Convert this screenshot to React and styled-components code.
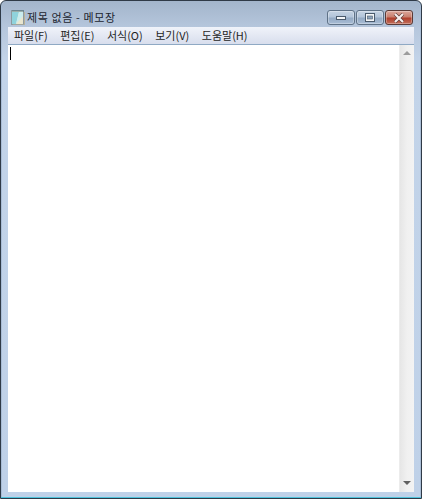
import styled, { createGlobalStyle } from "styled-components";

const GlobalStyle = createGlobalStyle`
  html, body {
    margin: 0;
    padding: 0;
    background: #fff;
  }
`;

const Window = styled.div`
  width: 422px;
  height: 499px;
  box-sizing: border-box;
  display: flex;
  flex-direction: column;
  border: 1px solid #2f3a47;
  border-radius: 6px 6px 0 0;
  padding: 0 7px 6px 7px;
  box-shadow: inset 0 -1px 0 #4fc3dc, inset 1px 0 0 #a9bdd6, inset -1px 0 0 #a9bdd6;
  background: linear-gradient(
    180deg,
    #a3b5cb 0,
    #b5c6dc 26px,
    #c3d4e9 60px,
    #bfd1e8 100%
  );
  font-family: "Noto Sans CJK KR", "Noto Sans", sans-serif;
  overflow: hidden;
`;

const TitleBar = styled.div`
  height: 26px;
  flex: none;
  display: flex;
  align-items: center;
  padding-left: 2px;
`;

const AppIcon = styled.svg`
  width: 16px;
  height: 16px;
  flex: none;
  margin-top: 6px;
`;

const Title = styled.div`
  margin: 5px 0 0 1px;
  font-size: 11px;
  color: #1c2530;
  letter-spacing: 0.6px;
`;

const Controls = styled.div`
  margin-left: auto;
  margin-top: 7px;
  display: flex;
  gap: 1px;
  padding-right: 1px;
`;

const ControlButton = styled.div`
  width: 28px;
  height: 15px;
  box-sizing: border-box;
  display: flex;
  align-items: center;
  justify-content: center;
  border: 1px solid ${(p) => (p.$close ? "#5a3a36" : "#5f7287")};
  border-radius: 3px;
  box-shadow: inset 0 0 0 1px rgba(255, 255, 255, 0.3);
  background: ${(p) =>
    p.$close
      ? "linear-gradient(180deg, #dca79b 0, #c9806f 45%, #b03f2c 55%, #c2705c 100%)"
      : "linear-gradient(180deg, #c5d3e3 0, #b3c5da 45%, #94aac4 55%, #a9bdd5 100%)"};
`;

const MenuBar = styled.div`
  height: 17px;
  flex: none;
  display: flex;
  align-items: center;
  padding-left: 6px;
  gap: 12.5px;
  border-bottom: 1px solid #8fa9c4;
  background: linear-gradient(180deg, #f0f3fa 0, #e4e8f3 50%, #d8deed 100%);
`;

const MenuItem = styled.div`
  font-size: 11px;
  line-height: 17px;
  color: #1f1f1f;
  white-space: nowrap;
`;

const Editor = styled.div`
  flex: 1;
  min-height: 0;
  display: flex;
  background: #fff;
`;

const TextArea = styled.div`
  flex: 1;
  padding: 2px 0 0 2px;
`;

const Caret = styled.div`
  width: 1px;
  height: 13px;
  background: #000;
`;

const ScrollBar = styled.div`
  width: 15px;
  flex: none;
  display: flex;
  flex-direction: column;
  align-items: center;
  justify-content: space-between;
  padding: 6px 0 7px;
  box-sizing: border-box;
  background: linear-gradient(90deg, #e6e6e6 0, #f0f0f0 50%, #f3f3f3 100%);
  border-left: 1px solid #ececec;
`;

const Arrow = styled.div`
  width: 0;
  height: 0;
  border-left: 4px solid transparent;
  border-right: 4px solid transparent;
  ${(p) =>
    p.$down ? "border-top: 4px solid #606060;" : "border-bottom: 4px solid #9c9c9c;"}
`;

const menus = ["파일(F)", "편집(E)", "서식(O)", "보기(V)", "도움말(H)"];

const App = () => {
  return (
    <>
      <GlobalStyle />
      <Window>
        <TitleBar>
          <AppIcon viewBox="0 0 16 16">
            <rect x="1.5" y="1.5" width="12" height="14" fill="#e9e6cf" stroke="#8d9aa0" />
            <path d="M2 3h7l-3 12H2z" fill="#8fd3dc" />
            <path d="M9 3h4v4l-7 8z" fill="#c9ecee" />
            <path d="M3 1v2M5 1v2M7 1v2M9 1v2M11 1v2M13 1v2" stroke="#4f7684" strokeWidth="1" />
            <path d="M14.5 3v13H3" stroke="#b7b29a" strokeWidth="1" fill="none" />
          </AppIcon>
          <Title>제목 없음 - 메모장</Title>
          <Controls>
            <ControlButton>
              <svg width="10" height="5" viewBox="0 0 10 5">
                <rect x="0.5" y="1.5" width="9" height="3" fill="#f4f6f8" stroke="#4a5a6c" />
              </svg>
            </ControlButton>
            <ControlButton>
              <svg width="10" height="9" viewBox="0 0 10 9">
                <rect x="0.5" y="0.5" width="9" height="8" fill="#f4f6f8" stroke="#4a5a6c" />
                <rect x="2.5" y="3" width="5" height="3" fill="#8ea3ba" stroke="#4a5a6c" strokeWidth="0.6" />
              </svg>
            </ControlButton>
            <ControlButton $close>
              <svg width="12" height="10" viewBox="0 0 12 10">
                <path d="M2 1l8 8M10 1l-8 8" stroke="#5b3a36" strokeWidth="3.4" />
                <path d="M2 1l8 8M10 1l-8 8" stroke="#f6eeec" strokeWidth="2.2" />
              </svg>
            </ControlButton>
          </Controls>
        </TitleBar>
        <MenuBar>
          {menus.map((m) => (
            <MenuItem key={m}>{m}</MenuItem>
          ))}
        </MenuBar>
        <Editor>
          <TextArea>
            <Caret />
          </TextArea>
          <ScrollBar>
            <Arrow />
            <Arrow $down />
          </ScrollBar>
        </Editor>
      </Window>
    </>
  );
};

export default App;
